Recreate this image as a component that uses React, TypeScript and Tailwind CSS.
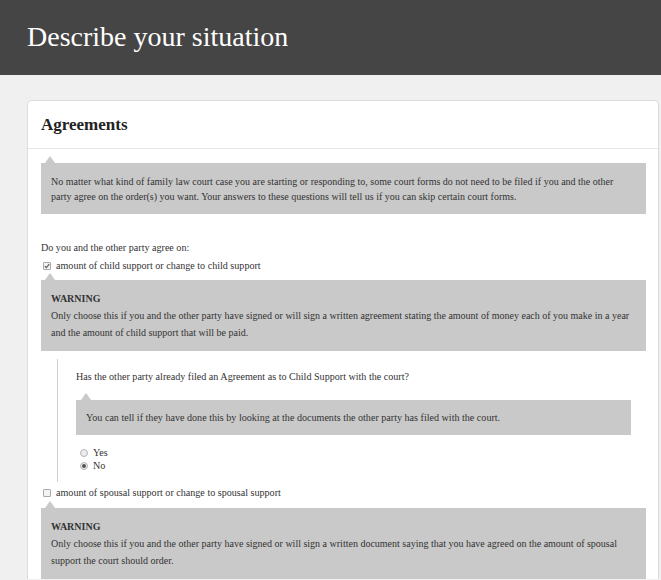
import React from "react";

const serif = "font-['Liberation_Serif','Times_New_Roman',serif]";

function Notch({ left }: { left: string }) {
  // small upward pointer on the grey callouts
  return (
    <span
      className={`absolute -top-[7px] ${left} h-0 w-0 border-x-[5px] border-b-[7px] border-x-transparent border-b-[#c9c9c9]`}
    />
  );
}

function Check({ checked }: { checked: boolean }) {
  return (
    <span className="inline-flex h-[8px] w-[8px] shrink-0 items-center justify-center rounded-[1px] border border-[#a9a9a9] bg-[#f3f3f3]">
      {checked && (
        <svg viewBox="0 0 8 8" className="h-[6px] w-[6px]">
          <path d="M1 4.2 L3.1 6.2 L7 1.6" fill="none" stroke="#555" strokeWidth="1.4" />
        </svg>
      )}
    </span>
  );
}

function Radio({ checked }: { checked: boolean }) {
  return (
    <span className="inline-flex h-[8px] w-[8px] shrink-0 items-center justify-center rounded-full border border-[#b5b5b5] bg-[#ececec]">
      {checked && <span className="h-[4px] w-[4px] rounded-full bg-[#555]" />}
    </span>
  );
}

export default function App() {
  return (
    <div className={`min-h-[580px] bg-[#f0f0f0] text-[#333] ${serif}`}>
      <header className="flex h-[75px] items-center bg-[#454545] px-[27px]">
        <h1 className="pb-[2px] text-[28px] leading-none text-white">Describe your situation</h1>
      </header>

      <div className="ml-[27px] mr-[2px] mt-[25px] rounded-t-[5px] border border-b-0 border-[#dcdcdc] bg-white">
        <div className="flex h-[48px] items-center border-b border-[#e6e6e6] pl-[13px]">
          <h2 className="text-[17px] font-bold leading-none text-[#222]">Agreements</h2>
        </div>

        <div className="pl-[13px] pr-[12px] pt-[14px] text-[10.1px]">
          <div className="relative bg-[#c9c9c9] px-[10px] pb-[10px] pt-[11px] text-[10px] leading-[15px]">
            <Notch left="left-[4px]" />
            No matter what kind of family law court case you are starting or responding to, some court forms do not need to be filed if you and the other party agree on the order(s) you want. Your answers to these questions will tell us if you can skip certain court forms.
          </div>

          <p className="mt-[25px] leading-[18px]">Do you and the other party agree on:</p>
          <label className="flex items-center gap-[5px] pl-[2px] leading-[18px]">
            <Check checked />
            <span>amount of child support or change to child support</span>
          </label>

          <div className="relative mt-[5px] bg-[#c9c9c9] px-[10px] py-[10px] text-[10px] leading-[17px]">
            <Notch left="left-[4px]" />
            <div className="font-bold">WARNING</div>
            <div>
              Only choose this if you and the other party have signed or will sign a written agreement stating the amount of money each of you make in a year and the amount of child support that will be paid.
            </div>
          </div>

          <div className="ml-[16px] mt-[8px] border-l border-[#cfcfcf] pb-[10px] pl-[18px] pr-[15px] pt-[9px]">
            <p className="leading-[18px]">Has the other party already filed an Agreement as to Child Support with the court?</p>
            <div className="relative mt-[14px] bg-[#c9c9c9] px-[10px] py-[10px] leading-[15px]">
              <Notch left="left-[5px]" />
              You can tell if they have done this by looking at the documents the other party has filed with the court.
            </div>
            <div className="mt-[11px] pl-[4px] leading-[13px]">
              <label className="flex items-center gap-[5px]">
                <Radio checked={false} />
                <span>Yes</span>
              </label>
              <label className="flex items-center gap-[5px]">
                <Radio checked />
                <span>No</span>
              </label>
            </div>
          </div>

          <label className="mt-[2px] flex items-center gap-[5px] pl-[2px] leading-[18px]">
            <Check checked={false} />
            <span>amount of spousal support or change to spousal support</span>
          </label>

          <div className="relative mt-[6px] bg-[#c9c9c9] px-[10px] py-[10px] text-[10px] leading-[17px]">
            <Notch left="left-[4px]" />
            <div className="font-bold">WARNING</div>
            <div>
              Only choose this if you and the other party have signed or will sign a written document saying that you have agreed on the amount of spousal support the court should order.
            </div>
          </div>
        </div>
      </div>
    </div>
  );
}
